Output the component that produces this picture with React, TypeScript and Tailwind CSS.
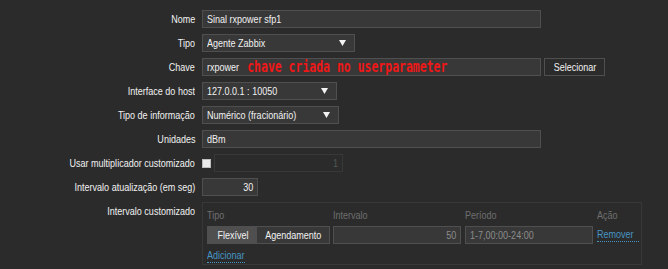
// Formulário de item (Zabbix, tema escuro)
// O texto da captura é Arial estreitado, então cada texto leva scale-x-[0.82]

const font = { fontFamily: '"Liberation Sans", Arial, sans-serif' }

function N({ children, o = 'origin-left' }: { children: React.ReactNode; o?: string }) {
  return <span className={`inline-block whitespace-nowrap scale-x-[0.82] ${o}`}>{children}</span>
}

function Caret() {
  return (
    <svg width="7" height="6" viewBox="0 0 7 6" className="shrink-0">
      <path d="M0 0 H7 L3.5 6 Z" fill="#f2f2f2" />
    </svg>
  )
}

function Row({ label, children }: { label: string; children: React.ReactNode }) {
  return (
    <div className="flex items-center h-[18px] mb-[6px]">
      <div className="w-[195px] shrink-0 text-right">
        <N o="origin-right">{label}</N>
      </div>
      <div className="ml-[7px] flex items-center h-full">{children}</div>
    </div>
  )
}

function Input({ w, value, right = false }: { w: string; value: string; right?: boolean }) {
  return (
    <div
      className={`${w} h-[18px] bg-[#383838] border border-[#4f4f4f] px-[4px] flex items-center ${right ? 'justify-end' : ''}`}
    >
      <N o={right ? 'origin-right' : 'origin-left'}>{value}</N>
    </div>
  )
}

function Select({ w, value }: { w: string; value: string }) {
  return (
    <div className={`${w} h-[18px] bg-[#383838] border border-[#4f4f4f] pl-[4px] pr-[8px] flex items-center justify-between`}>
      <N>{value}</N>
      <Caret />
    </div>
  )
}

export default function App() {
  return (
    <div className="w-[668px] h-[269px] bg-[#2b2b2b] text-[#f2f2f2] text-[11px] leading-none pt-[10px] overflow-hidden" style={font}>
      <Row label="Nome">
        <Input w="w-[339px]" value="Sinal rxpower sfp1" />
      </Row>
      <Row label="Tipo">
        <Select w="w-[153px]" value="Agente Zabbix" />
      </Row>
      <Row label="Chave">
        <div className="w-[339px] h-[18px] bg-[#383838] border border-[#4f4f4f] px-[4px] flex items-center overflow-hidden">
          <span className="shrink-0 inline-flex items-center whitespace-nowrap scale-x-[0.82] origin-left">
            <span>rxpower</span>
            {/* anotação em vermelho sobre o campo */}
            <span
              className="ml-[10px] inline-block origin-left scale-x-[0.874] text-[#ef1717] font-bold text-[16px]"
              style={{ fontFamily: '"DejaVu Sans Mono", "Liberation Mono", monospace' }}
            >
              chave criada no userparameter
            </span>
          </span>
        </div>
        <button className="ml-[3px] w-[61px] h-[18px] border border-[#4f4f4f] bg-[#2b2b2b] text-[#f2f2f2] flex items-center justify-center">
          <N o="origin-center">Selecionar</N>
        </button>
      </Row>
      <Row label="Interface do host">
        <Select w="w-[135px]" value="127.0.0.1 : 10050" />
      </Row>
      <Row label="Tipo de informação">
        <Select w="w-[137px]" value="Numérico (fracionário)" />
      </Row>
      <Row label="Unidades">
        <Input w="w-[339px]" value="dBm" />
      </Row>
      <Row label="Usar multiplicador customizado">
        <div className="w-[9px] h-[9px] bg-[#ebebeb] border border-[#bdbdbd]" />
        <div className="ml-[3px] w-[129px] h-[18px] border border-[#383838] px-[4px] flex items-center justify-end text-[#555555]">
          <N o="origin-right">1</N>
        </div>
      </Row>
      <Row label="Intervalo atualização (em seg)">
        <Input w="w-[56px]" value="30" right />
      </Row>

      <div className="flex">
        <div className="w-[195px] shrink-0 text-right pt-[4px]">
          <N o="origin-right">Intervalo customizado</N>
        </div>
        <div className="ml-[7px] w-[440px] h-[63px] border border-[#383838] pl-[4px] pt-[7px]">
          <div className="flex text-[#6f6f6f]">
            <div className="w-[126px]"><N>Tipo</N></div>
            <div className="w-[132px]"><N>Intervalo</N></div>
            <div className="w-[132px]"><N>Período</N></div>
            <div><N>Ação</N></div>
          </div>
          <div className="flex items-center mt-[5px] h-[18px]">
            <div className="flex w-[123px] h-[18px] border border-[#4f4f4f]">
              <div className="w-[49px] bg-[#4f4f4f] flex items-center justify-center">
                <N o="origin-center">Flexível</N>
              </div>
              <div className="flex-1 bg-[#383838] flex items-center justify-center">
                <N o="origin-center">Agendamento</N>
              </div>
            </div>
            <div className="ml-[3px] w-[128px] h-[18px] bg-[#383838] border border-[#4f4f4f] px-[4px] flex items-center justify-end text-[#8c8c8c]">
              <N o="origin-right">50</N>
            </div>
            <div className="ml-[4px] w-[128px] h-[18px] bg-[#383838] border border-[#4f4f4f] px-[4px] flex items-center text-[#8c8c8c]">
              <N>1-7,00:00-24:00</N>
            </div>
            <span className="ml-[4px] w-[42px] text-[#4796c4] border-b border-dotted border-[#4796c4] pb-[1px]">
              <N>Remover</N>
            </span>
          </div>
          <div className="mt-[6px]">
            <span className="inline-block w-[38px] text-[#4796c4] border-b border-dotted border-[#4796c4] pb-[1px]">
              <N>Adicionar</N>
            </span>
          </div>
        </div>
      </div>
    </div>
  )
}
